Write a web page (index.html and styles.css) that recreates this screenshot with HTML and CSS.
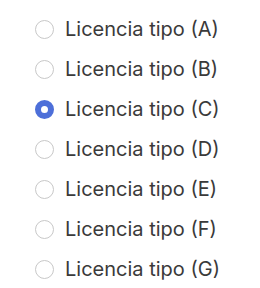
FILE: index.html
```html
<!DOCTYPE html>
<html lang="es">
<head>
  <meta charset="UTF-8" />
  <title>Licencias</title>
  <link rel="stylesheet" href="styles.css">
</head>
<body>
  <div class="radio-list">
    <label class="option"><input type="radio" name="lic" value="A"><span class="dot"></span>Licencia tipo (A)</label>
    <label class="option"><input type="radio" name="lic" value="B"><span class="dot"></span>Licencia tipo (B)</label>
    <label class="option"><input type="radio" name="lic" value="C" checked><span class="dot"></span>Licencia tipo (C)</label>
    <label class="option"><input type="radio" name="lic" value="D"><span class="dot"></span>Licencia tipo (D)</label>
    <label class="option"><input type="radio" name="lic" value="E"><span class="dot"></span>Licencia tipo (E)</label>
    <label class="option"><input type="radio" name="lic" value="F"><span class="dot"></span>Licencia tipo (F)</label>
    <label class="option"><input type="radio" name="lic" value="G"><span class="dot"></span>Licencia tipo (G)</label>
  </div>
</body>
</html>
```

FILE: styles.css
```css
html, body {
  margin: 0; padding: 0;
  background: #fff; color: #3a3a3a;
  font-family: Inter, "Noto Sans", sans-serif;
}
.radio-list {
  display: flex; flex-direction: column;
  padding: 9px 0 0 35px;
}
.option {
  display: flex; align-items: center;
  height: 40px; font-size: 20px;
  cursor: pointer;
}
.option input { display: none; }
.dot {
  width: 19px; height: 19px;
  box-sizing: border-box;
  border: 1px solid #c8c8c8; border-radius: 50%;
  margin-right: 11px; flex-shrink: 0;
}
.option input:checked + .dot {
  border: 6px solid #4d6fd9;
  background: #fff;
}
```
